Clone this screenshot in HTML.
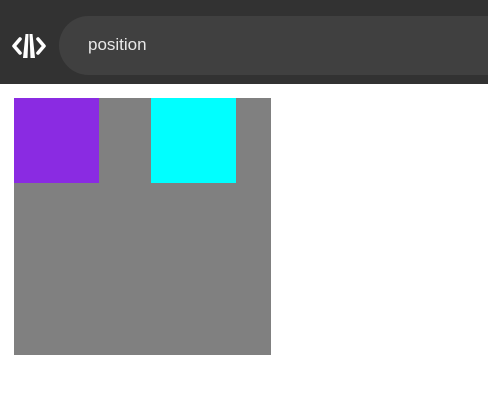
<!DOCTYPE html>
<html><head><style>
html,body{margin:0;padding:0;width:488px;height:405px;background:#fff;overflow:hidden;font-family:"Liberation Sans",sans-serif}
.hdr{position:absolute;left:0;top:0;width:488px;height:84px;background:#323232}
.bar{position:absolute;left:59px;top:16px;width:460px;height:59px;background:#404040;border-radius:30px}
.txt{position:absolute;left:88px;top:35px;color:#e8e8e8;font-size:17px}
.g{position:absolute;left:14px;top:98px;width:257px;height:257px;background:#808080}
.p{position:absolute;left:14px;top:98px;width:85px;height:85px;background:#8a2be2}
.c{position:absolute;left:151px;top:98px;width:85px;height:85px;background:#00ffff}
</style></head><body>
<div class="hdr"></div>
<div class="bar"></div>
<svg style="position:absolute;left:0;top:0" width="60" height="84" viewBox="0 0 60 84">
<g fill="none" stroke="#fff" stroke-width="3.6" stroke-linecap="round" stroke-linejoin="round">
<path d="M20 39 L14 46 L20 53"/>
<path d="M38 39 L44 46 L38 53"/>
</g>
<g fill="#fff">
<polygon points="25.5,34 28.5,34 27.5,58 23,58"/>
<polygon points="29.5,34 32.5,34 35,58 30.5,58"/>
</g>
</svg>
<div class="txt">position</div>
<div class="g"></div>
<div class="p"></div>
<div class="c"></div>
</body></html>
